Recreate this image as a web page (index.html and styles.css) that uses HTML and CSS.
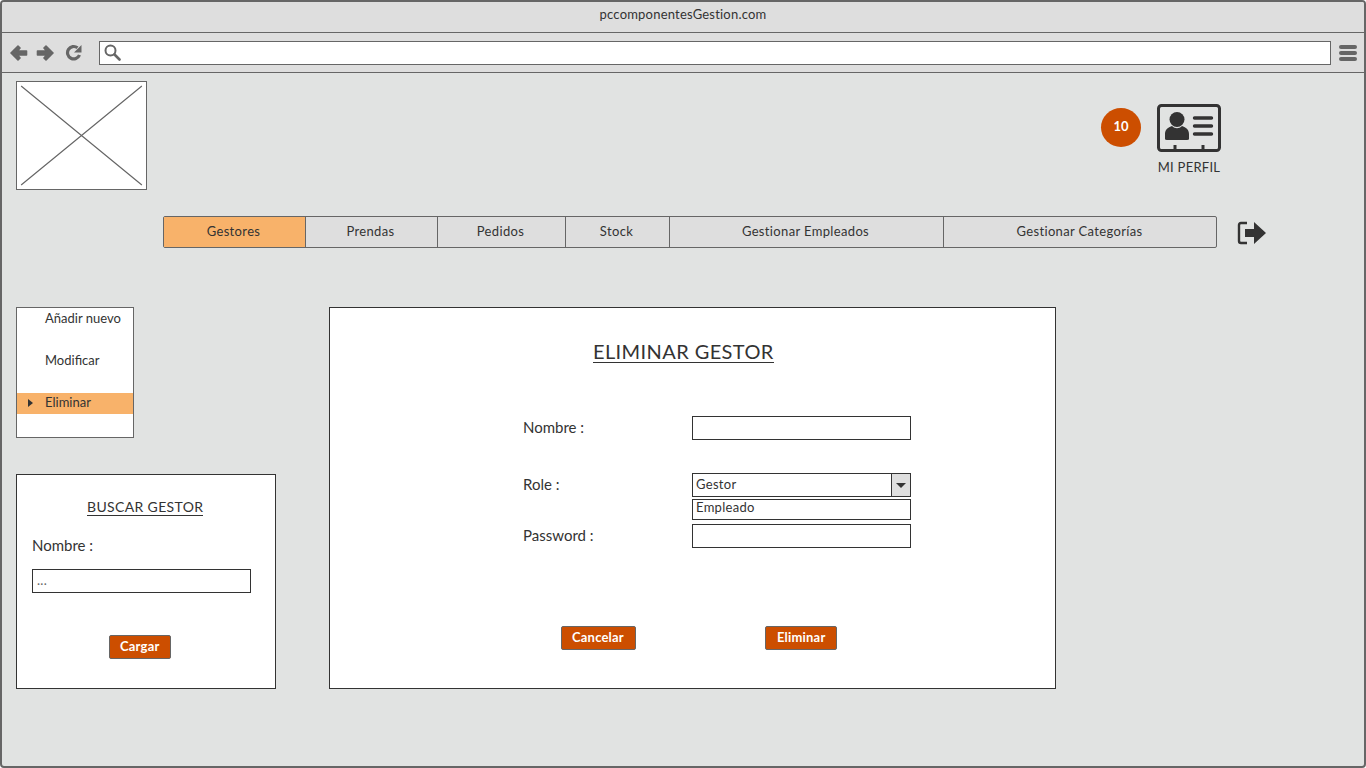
FILE: index.html
```html
<html>

<head>
    <meta name="viewport" content="width=device-width, initial-scale=1.0">
    <meta charset="UTF-8">
    <title>pccomponentesGestion.com</title>
    <link rel="stylesheet" href="styles.css">
</head>

<body>
    <div class="window">
        <div class="titlebar">pccomponentesGestion.com</div>
        <div class="toolbar">
            <svg class="nav-icon" width="18" height="16" viewBox="0 0 18 16">
                <path d="M8 1 L1 8 L8 15 L10 13 L7.5 10 H16.5 V6 H7.5 L10 3 Z" fill="#666" stroke="#666" stroke-width="1.6" stroke-linejoin="round"/>
            </svg>
            <svg class="nav-icon" width="18" height="16" viewBox="0 0 18 16">
                <path d="M10 1 L17 8 L10 15 L8 13 L10.5 10 H1.5 V6 H10.5 L8 3 Z" fill="#666" stroke="#666" stroke-width="1.6" stroke-linejoin="round"/>
            </svg>
            <svg class="nav-icon reload" width="17" height="17" viewBox="0 0 17 17">
                <path d="M14.5 11 A6.2 6.2 0 1 1 12.5 3.8" fill="none" stroke="#666" stroke-width="3.2"/>
                <path d="M16.5 1 V8.5 H9 Z" fill="#666"/>
            </svg>
            <div class="address">
                <svg width="17" height="17" viewBox="0 0 17 17">
                    <circle cx="6.5" cy="6.5" r="5" fill="none" stroke="#666" stroke-width="2"/>
                    <path d="M10.5 10.5 L15.5 15.5" stroke="#666" stroke-width="2.6" stroke-linecap="round"/>
                </svg>
            </div>
            <div class="burger"><span></span><span></span><span></span></div>
        </div>

        <div class="content">
            <div class="header">
                <svg class="logo" width="131" height="109" viewBox="0 0 131 109">
                    <path d="M4 4 L127 105 M127 4 L4 105" stroke="#666" stroke-width="1.2"/>
                </svg>
                <div class="badge">10</div>
                <div class="profile">
                    <svg width="64" height="48" viewBox="0 0 64 48">
                        <rect x="1.5" y="1.5" width="61" height="45" rx="3" fill="none" stroke="#333" stroke-width="3"/>
                        <circle cx="20" cy="15.5" r="7.5" fill="#333"/>
                        <path d="M8 35 V30 C8 25 12 23 15 22 C18 25 22 25 25 22 C28 23 32 25 32 30 V35 Q32 36 30 36 H10 Q8 36 8 35 Z" fill="#333"/>
                        <path d="M37.5 14 H54.5 M37.5 22 H54.5 M37.5 30 H54.5" stroke="#333" stroke-width="3.4" stroke-linecap="round"/>
                        <path d="M18 41 V46 M46 41 V46" stroke="#333" stroke-width="3"/>
                    </svg>
                    <span>MI PERFIL</span>
                </div>
            </div>

            <div class="navrow">
                <div class="tabs">
                    <div class="tab active">Gestores</div>
                    <div class="tab">Prendas</div>
                    <div class="tab">Pedidos</div>
                    <div class="tab">Stock</div>
                    <div class="tab">Gestionar Empleados</div>
                    <div class="tab">Gestionar Categorías</div>
                </div>
                <svg class="logout" width="30" height="26" viewBox="0 0 30 26">
                    <path d="M10 3 H4 Q2 3 2 5 V21 Q2 23 4 23 H10" fill="none" stroke="#333" stroke-width="2.4"/>
                    <path d="M8 9 H17 V2 L29 13 L17 24 V17 H8 Z" fill="#333"/>
                </svg>
            </div>

            <div class="columns">
                <div class="left">
                    <div class="side-menu">
                        <div class="side-item">Añadir nuevo</div>
                        <div class="side-item">Modificar</div>
                        <div class="side-item current">Eliminar</div>
                    </div>
                    <div class="search-box">
                        <div class="search-title">BUSCAR GESTOR</div>
                        <div class="search-label">Nombre :</div>
                        <div class="field search-field">...</div>
                        <div class="btn search-btn">Cargar</div>
                    </div>
                </div>

                <div class="panel">
                    <div class="panel-title">ELIMINAR GESTOR</div>
                    <div class="form-row row-name">
                        <label>Nombre :</label>
                        <div class="field"></div>
                    </div>
                    <div class="form-row row-role">
                        <label>Role :</label>
                        <div class="field select">
                            Gestor
                            <div class="select-arrow"></div>
                            <div class="select-list">Empleado</div>
                        </div>
                    </div>
                    <div class="form-row row-pass">
                        <label>Password :</label>
                        <div class="field"></div>
                    </div>
                    <div class="actions">
                        <div class="btn btn-cancel">Cancelar</div>
                        <div class="btn btn-delete">Eliminar</div>
                    </div>
                </div>
            </div>
        </div>
    </div>
</body>

</html>
```

FILE: styles.css
```css
body {
    margin: 0;
    font-family: "Lato", "Open Sans", sans-serif;
    font-size: 13px;
    color: #333;
}

.window {
    width: 1366px;
    height: 768px;
    box-sizing: border-box;
    border: 2px solid #666;
    border-radius: 4px;
    background-color: #e1e3e2;
    overflow: hidden;
}

.titlebar {
    height: 30px;
    line-height: 24px;
    text-align: center;
    font-size: 13px;
    letter-spacing: 0.2px;
    background-color: #dedede;
    border-bottom: 1px solid #666;
}

.toolbar {
    display: flex;
    align-items: center;
    height: 39px;
    background-color: #dedede;
    border-bottom: 1px solid #666;
    padding-left: 8px;
}

.nav-icon {
    margin-right: 8px;
}

.reload {
    margin-left: 3px;
    margin-right: 9px;
}

.address {
    display: flex;
    align-items: center;
    width: 1232px;
    height: 24px;
    margin-left: 8px;
    box-sizing: border-box;
    border: 1px solid #666;
    background-color: #fff;
    padding-left: 4px;
}

.burger {
    display: flex;
    flex-direction: column;
    gap: 2px;
    margin-left: 8px;
}

.burger span {
    width: 18px;
    height: 4px;
    border-radius: 2px;
    background-color: #666;
}

.content {
    padding: 8px 0 0 14px;
}

.header {
    display: flex;
    align-items: flex-start;
    height: 109px;
}

.logo {
    box-sizing: border-box;
    border: 1px solid #666;
    background-color: #fff;
}

.badge {
    width: 40px;
    height: 39px;
    margin-top: 27px;
    margin-left: 954px;
    border-radius: 50%;
    background-color: #cc4e00;
    color: #fff;
    font-size: 13px;
    font-weight: bold;
    line-height: 36px;
    text-align: center;
}

.profile {
    display: flex;
    flex-direction: column;
    align-items: center;
    width: 64px;
    margin-top: 23px;
    margin-left: 16px;
}

.profile span {
    margin-top: 7px;
    letter-spacing: 0.25px;
    white-space: nowrap;
}

.navrow {
    display: flex;
    margin-top: 26px;
    margin-left: 147px;
}

.tabs {
    display: grid;
    grid-template-columns: 141px 132px 128px 104px 274px 274px;
    width: 1054px;
    height: 32px;
    box-sizing: border-box;
    border: 1px solid #666;
    border-radius: 2px;
    background-color: #dedede;
}

.tab {
    padding-right: 2px;
    line-height: 29px;
    letter-spacing: 0.35px;
    text-align: center;
    border-left: 1px solid #666;
}

.tab:first-child {
    border-left: none;
}

.active {
    background-color: #f8b26a;
}

.logout {
    margin-top: 4px;
    margin-left: 20px;
}

.columns {
    display: flex;
    margin-top: 59px;
}

.left {
    display: flex;
    flex-direction: column;
    gap: 36px;
    width: 260px;
}

.side-menu {
    width: 118px;
    height: 131px;
    box-sizing: border-box;
    border: 1px solid #666;
    background-color: #fff;
    padding-top: 1px;
}

.side-item {
    position: relative;
    height: 21px;
    margin-bottom: 21px;
    padding-left: 28px;
    line-height: 18px;
}

.current {
    background-color: #f8b26a;
}

.current::before {
    content: "";
    position: absolute;
    left: 11px;
    top: 6px;
    border-left: 5px solid #333;
    border-top: 4px solid transparent;
    border-bottom: 4px solid transparent;
}

.search-box {
    height: 215px;
    box-sizing: border-box;
    border: 1px solid #333;
    background-color: #fff;
    padding: 24px 15px 0;
}

.search-title {
    width: fit-content;
    margin-left: 55px;
    border-bottom: 1px solid #333;
    font-size: 14px;
    letter-spacing: 0.35px;
    line-height: 16px;
}

.search-label {
    margin-top: 20px;
    font-size: 15px;
}

.field {
    width: 219px;
    height: 24px;
    box-sizing: border-box;
    border: 1px solid #333;
    background-color: #fff;
    line-height: 20px;
    padding-left: 3px;
    font-size: 13px;
    letter-spacing: 0.3px;
}

.search-field {
    margin-top: 15px;
    padding-left: 4px;
    line-height: 21px;
    color: #666;
}

.btn {
    width: fit-content;
    height: 24px;
    box-sizing: border-box;
    border: 1px solid #666;
    border-radius: 2px;
    background-color: #cc4e00;
    color: #fff;
    font-weight: bold;
    letter-spacing: 0.2px;
    line-height: 21px;
}

.search-btn {
    margin-top: 42px;
    margin-left: 77px;
    padding: 0 10px;
}

.panel {
    width: 727px;
    height: 382px;
    margin-left: 53px;
    box-sizing: border-box;
    border: 1px solid #333;
    background-color: #fff;
}

.panel-title {
    width: fit-content;
    margin-top: 33px;
    margin-left: 263px;
    border-bottom: 1px solid #333;
    font-size: 20px;
    letter-spacing: 0.4px;
    line-height: 21px;
}

.form-row {
    display: flex;
    align-items: center;
    margin-left: 193px;
}

.form-row label {
    width: 169px;
    margin-top: -2px;
    font-size: 15px;
}

.row-name {
    margin-top: 53px;
}

.row-role {
    margin-top: 33px;
}

.row-pass {
    margin-top: 27px;
}

.select {
    position: relative;
}

.select-arrow {
    position: absolute;
    right: 0;
    top: 0;
    width: 18px;
    height: 22px;
    border-left: 1px solid #333;
    background-color: #dedede;
}

.select-arrow::after {
    content: "";
    position: absolute;
    left: 4px;
    top: 9px;
    border-top: 5px solid #333;
    border-left: 5px solid transparent;
    border-right: 5px solid transparent;
}

.select-list {
    position: absolute;
    left: -1px;
    top: 25px;
    width: 219px;
    height: 21px;
    box-sizing: border-box;
    border: 1px solid #333;
    background-color: #fff;
    padding-left: 3px;
    line-height: 15px;
}

.actions {
    display: flex;
    margin-top: 78px;
    margin-left: 231px;
}

.btn-cancel {
    padding: 0 11px 0 10px;
}

.btn-delete {
    margin-left: 129px;
    padding: 0 11px;
}
```
